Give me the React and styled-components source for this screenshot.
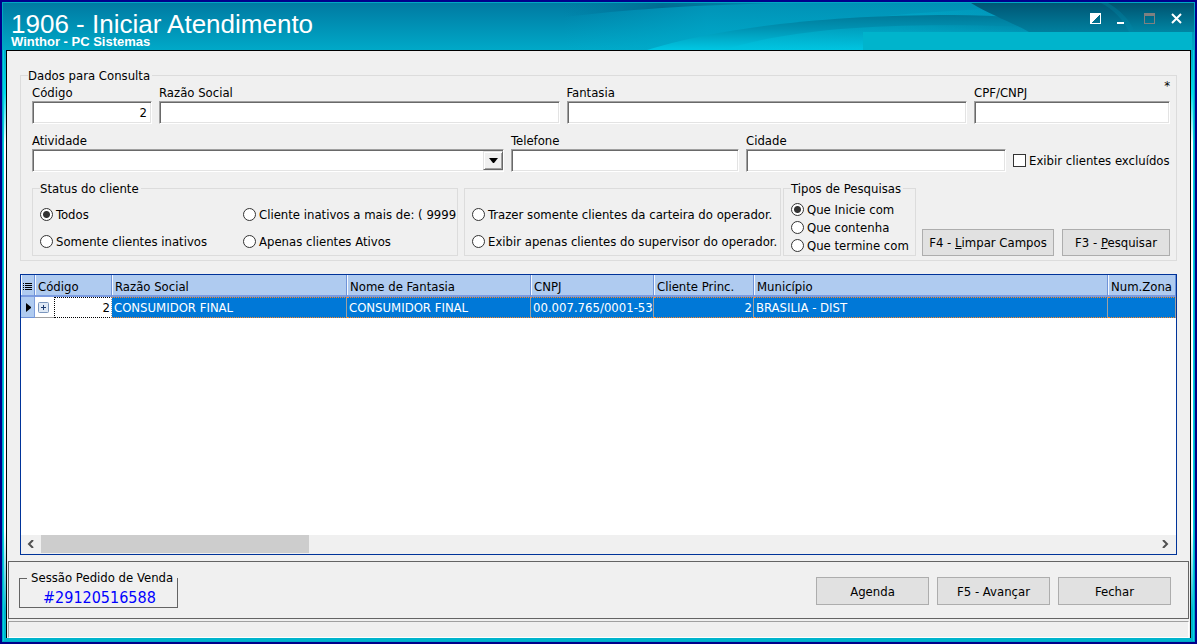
import React, { useState } from 'react';
import styled, { createGlobalStyle, css } from 'styled-components';

const GlobalStyle = createGlobalStyle`
  * {
    box-sizing: border-box;
  }

  body {
    margin: 0;
    font: 13px/15px 'DejaVu Sans Condensed', Tahoma, sans-serif;
    color: #000;
  }

  button, input, select {
    font: inherit;
    color: inherit;
  }
`;

const Frame = styled.div`
  display: flex;
  flex-direction: column;
  min-height: 100vh;
  border: 2px solid #00008b;
  background: #fff;
`;

const Chrome = styled.div`
  flex: 1;
  display: flex;
  flex-direction: column;
  padding: 0 3px 3px;
  border: 1px solid #00a8c4;
  background: linear-gradient(
    #009fbe 40px,
    #00dcec 90px,
    #fff 140px,
    #fff calc(100% - 110px),
    #00b4cc calc(100% - 30px)
  );
  box-shadow: inset 1px 0 #00d0e4, inset -1px 0 #00d0e4;
`;

const TitleBar = styled.header`
  position: relative;
  display: flex;
  justify-content: space-between;
  height: 47px;
  margin: 0 -3px;
  padding: 11px 10px 0 8px;
  color: #fff;
  font-family: 'Liberation Sans', Arial, sans-serif;
  background: linear-gradient(#007aa2, #00a9c8);
`;

const Waves = styled.svg`
  position: absolute;
  top: 0;
  right: 0;
  width: 631px;
  height: 47px;
`;

const Titles = styled.div`
  position: relative;
`;

const Title = styled.h1`
  margin: 0;
  font-size: 26px;
  line-height: 21px;
  font-weight: normal;
`;

const Subtitle = styled.p`
  margin: 0;
  font-size: 13px;
  line-height: 14px;
  font-weight: bold;
`;

const WindowButtons = styled.div`
  position: relative;
  display: flex;
  gap: 14px;
  margin-top: -1px;
`;

const WindowButton = styled.button`
  width: 13px;
  height: 11px;
  padding: 0;
  border: 0;
  background: none;

  svg {
    display: block;
  }
`;

const Body = styled.div`
  flex: 1;
  display: flex;
  flex-direction: column;
  border: 1px solid #000;
  border-bottom: 0;
  background: #f0f0f0;
`;

const Content = styled.main`
  flex: 1;
  display: flex;
  flex-direction: column;
  gap: 13px;
  padding: 17px 13px 6px;
`;

const Group = styled.fieldset`
  min-width: 0;
  margin: 0;
  padding: 0 7px;
  border: 1px solid #dcdcdc;

  legend {
    padding: 0 2px 0 0;
  }
`;

const SearchGroup = styled(Group)`
  position: relative;
  padding: 0 6px 4px 7px;
`;

const Fields = styled.div`
  display: flex;
  flex-direction: column;
  gap: 9px;
  padding: 2px 0 0 4px;
`;

const FieldRow = styled.div`
  display: grid;
  grid-template-columns: ${(p) => p.$columns};
  column-gap: 7px;
`;

const FieldBox = styled.div`
  display: flex;
  flex-direction: column;
  gap: 1px;
  min-width: 0;
`;

const sunken = css`
  width: 100%;
  height: 23px;
  padding: 0 4px;
  border: 1px solid;
  border-color: #a0a0a0 #fff #fff #a0a0a0;
  border-radius: 0;
  outline: none;
  background: #fff;
  box-shadow: inset 1px 1px #696969, inset -1px -1px #e3e3e3;
`;

const TextInput = styled.input`
  ${sunken}
  text-align: ${(p) => p.$align || 'left'};
`;

const SelectBox = styled.div`
  position: relative;
`;

const Select = styled.select`
  ${sunken}
  display: block;
  appearance: none;
`;

const DropArrow = styled.span`
  position: absolute;
  top: 2px;
  right: 1px;
  bottom: 2px;
  display: flex;
  align-items: center;
  justify-content: center;
  width: 20px;
  border: 1px solid;
  border-color: #e3e3e3 #696969 #696969 #e3e3e3;
  background: #f0f0f0;
  box-shadow: inset 1px 1px #fff, inset -1px -1px #a0a0a0;
  pointer-events: none;
`;

const Required = styled.span`
  position: absolute;
  top: -5px;
  right: 6px;
`;

const Option = styled.label`
  display: flex;
  align-items: center;
  gap: 3px;
  white-space: nowrap;
`;

const Radio = styled.input`
  flex: none;
  width: 13px;
  height: 13px;
  margin: 0;
  appearance: none;
  border: 1px solid #333;
  border-radius: 50%;
  background: #fff;

  &:checked {
    background: radial-gradient(circle, #333 3px, #fff 4px);
  }
`;

const Checkbox = styled.input`
  flex: none;
  width: 13px;
  height: 13px;
  margin: 0;
  appearance: none;
  border: 1px solid #333;
  background: #fff;

  &:checked {
    background: #333;
    box-shadow: inset 0 0 0 2px #fff;
  }
`;

const CheckOption = styled(Option)`
  align-self: end;
  height: 23px;
`;

const FilterRow = styled.div`
  display: flex;
  gap: 6px;
`;

const StatusGroup = styled(Group)`
  flex: 1;
`;

const StatusOptions = styled.div`
  display: grid;
  grid-template-columns: 203px 1fr;
  row-gap: 12px;
  padding: 11px 0 6px;
`;

const GroupPair = styled.div`
  display: flex;
  gap: 2px;
`;

const OperatorGroup = styled(Group)`
  width: 317px;
  margin-top: 7px;
`;

const OperatorOptions = styled.div`
  display: grid;
  row-gap: 12px;
  padding: 18px 0 6px;
`;

const MatchGroup = styled(Group)`
  width: 133px;
`;

const MatchOptions = styled.div`
  display: grid;
  row-gap: 3px;
  padding: 6px 0 2px;
`;

const Buttons = styled.div`
  display: flex;
  align-items: flex-end;
  gap: 8px;
`;

const Button = styled.button`
  width: ${(p) => p.$width || 113}px;
  height: ${(p) => p.$height || 27}px;
  padding: 0;
  border: 1px solid #adadad;
  background: #e1e1e1;
  white-space: nowrap;

  &:hover {
    border-color: #0078d7;
    background: #e5f1fb;
  }
`;

const Grid = styled.section`
  flex: 1;
  display: flex;
  flex-direction: column;
  justify-content: space-between;
  min-height: 281px;
  border: 1px solid #003399;
  background: #fff;
`;

const Table = styled.table`
  width: 100%;
  table-layout: fixed;
  border-collapse: separate;
  border-spacing: 0;
`;

const HeadCell = styled.th`
  height: 22px;
  padding: 2px 0 0 3px;
  border-right: 1px solid #6f93d8;
  border-bottom: 2px solid #7b9be0;
  background: #afcbf0;
  box-shadow: inset 1px 0 #f4f8fe;
  font-weight: normal;
  text-align: left;
  white-space: nowrap;
  overflow: hidden;

  svg {
    display: block;
    margin-left: -1px;
  }
`;

const MarkerCell = styled.td`
  height: 21px;
  padding: 0 0 0 5px;
  border-right: 1px solid #7f9fdd;
  border-bottom: 1px solid #6f93d8;
  background: #afcbf0;

  svg {
    display: block;
  }
`;

const ExpandCell = styled.td`
  padding: 0 0 0 3px;
  border-bottom: 1px solid #a0a0a0;
`;

const ExpandButton = styled.button`
  display: block;
  width: 11px;
  height: 11px;
  padding: 0;
  border: 0;
  background: none;

  svg {
    display: block;
  }
`;

const FocusCell = styled.td`
  padding: 0 1px 0 0;
  border: 1px dotted #000;
  border-right-color: #a0a0a0;
  text-align: right;
`;

const Cell = styled.td`
  padding: 0 1px 0 2px;
  border-top: 1px dotted #ff8728;
  border-right: 1px solid #a0a0a0;
  border-bottom: 1px dotted #ff8728;
  background: #0078d7;
  color: #fff;
  text-align: ${(p) => p.$align || 'left'};
  white-space: nowrap;
  overflow: hidden;
`;

const ScrollBar = styled.div`
  display: flex;
  height: 19px;
  background: #f0f0f0;
`;

const ScrollTrack = styled.div`
  flex: 1;
  padding-bottom: 1px;
`;

const ScrollThumb = styled.div`
  width: 24%;
  height: 100%;
  background: #cdcdcd;
`;

const ScrollButton = styled.button`
  display: flex;
  align-items: center;
  justify-content: center;
  width: 20px;
  padding: 0 2px 2px 0;
  border: 0;
  background: none;
`;

const Footer = styled.footer`
  display: flex;
  align-items: flex-start;
  justify-content: space-between;
  margin: 0 1px;
  padding: 9px 17px 10px 10px;
  border: 1px solid #646464;
`;

const FooterButtons = styled(Buttons)`
  padding-top: 6px;
`;

const Session = styled.fieldset`
  width: 159px;
  margin: 0;
  padding: 3px 0 0 7px;
  border: 1px solid #646464;
  white-space: nowrap;

  legend {
    padding: 0 4px;
    line-height: 14px;
  }
`;

const SessionNumber = styled.output`
  display: block;
  padding-left: 16px;
  font-size: 16px;
  line-height: 19px;
  color: #0000ff;
`;

const StatusBar = styled.div`
  height: 17px;
  margin: 2px 1px 0;
  border: 1px solid;
  border-color: #a0a0a0 #fff #fff #a0a0a0;
`;

const statusOptions = [
  'Todos',
  'Cliente inativos a mais de: ( 9999',
  'Somente clientes inativos',
  'Apenas clientes Ativos',
];

const operatorOptions = [
  'Trazer somente clientes da carteira do operador.',
  'Exibir apenas clientes do supervisor do operador.',
];

const matchOptions = ['Que Inicie com', 'Que contenha', 'Que termine com'];

const columns = ['Razão Social', 'Nome de Fantasia', 'CNPJ', 'Cliente Princ.', 'Município', 'Num.Zona'];

function Field({ id, label, ...rest }) {
  return (
    <FieldBox>
      <label htmlFor={id}>{label}</label>
      <TextInput id={id} type="text" {...rest} />
    </FieldBox>
  );
}

function RadioList({ name, options, value, onChange }) {
  return options.map((option) => (
    <Option key={option}>
      <Radio
        type="radio"
        name={name}
        checked={value === option}
        onChange={() => onChange(option)}
      />
      {option}
    </Option>
  ));
}

function TitleWaves() {
  return (
    <Waves viewBox="0 0 631 47" preserveAspectRatio="none" aria-hidden="true">
      <defs>
        <linearGradient id="glow" x1="0" y1="0" x2="1" y2="0">
          <stop offset="0" stopColor="#00b0d0" stopOpacity="0" />
          <stop offset="0.3" stopColor="#00b0d0" stopOpacity="0.45" />
          <stop offset="1" stopColor="#00b0d0" stopOpacity="0.4" />
        </linearGradient>
        <linearGradient id="sliver" x1="0" y1="0" x2="1" y2="0">
          <stop offset="0" stopColor="#006c92" stopOpacity="0" />
          <stop offset="0.45" stopColor="#006c92" />
          <stop offset="1" stopColor="#006c92" stopOpacity="0.2" />
        </linearGradient>
        <linearGradient id="swell" x1="0.4" y1="0" x2="0.3" y2="1">
          <stop offset="0" stopColor="#007a9a" />
          <stop offset="0.4" stopColor="#0093b3" />
          <stop offset="1" stopColor="#00c6e2" />
        </linearGradient>
        <linearGradient id="shine" x1="0" y1="0" x2="1" y2="0">
          <stop offset="0" stopColor="#00c4e0" stopOpacity="0.4" />
          <stop offset="0.6" stopColor="#00c4e0" stopOpacity="0.25" />
          <stop offset="1" stopColor="#00c4e0" stopOpacity="0" />
        </linearGradient>
        <linearGradient id="deep" x1="0" y1="0" x2="0" y2="1">
          <stop offset="0" stopColor="#005674" />
          <stop offset="1" stopColor="#00809f" />
        </linearGradient>
        <linearGradient id="edge" x1="0" y1="0" x2="0" y2="1">
          <stop offset="0" stopColor="#00526f" />
          <stop offset="1" stopColor="#0086a4" />
        </linearGradient>
      </defs>
      <path d="M0 0H480V47H0Z" fill="url(#glow)" />
      <path d="M0 0H220C130 2 70 6 0 14Z" fill="url(#sliver)" />
      <path d="M150 47C200 26 300 10 470 4V47Z" fill="url(#shine)" />
      <path d="M84 47C150 27 250 12 390 12C450 12 500 18 540 28V47Z" fill="url(#swell)" />
      <path d="M160 47C220 28 310 18 470 24V47Z" fill="url(#shine)" />
      <path d="M408 0H631V29H466C450 20 428 12 408 0Z" fill="url(#deep)" />
      <path d="M545 0H631V29H572C566 16 558 8 545 0Z" fill="url(#edge)" />
      <path d="M545 0C558 8 566 16 572 29H566C560 16 550 6 538 0Z" fill="#00a0bc" opacity="0.2" />
      <rect x="300" y="29" width="329" height="18" fill="#00b4cc" />
    </Waves>
  );
}

function App() {
  const [status, setStatus] = useState('Todos');
  const [operator, setOperator] = useState('');
  const [match, setMatch] = useState('Que Inicie com');

  return (
    <Frame>
      <GlobalStyle />
      <Chrome>
        <TitleBar>
          <TitleWaves />
          <Titles>
            <Title>1906 - Iniciar Atendimento</Title>
            <Subtitle>Winthor - PC Sistemas</Subtitle>
          </Titles>
          <WindowButtons>
            <WindowButton type="button" aria-label="Alternar tema">
              <svg width="11" height="11" viewBox="0 0 11 11" shapeRendering="crispEdges">
                <path d="M0 0H11V11H0ZM10 1L1 10H10Z" fill="#fff" fillRule="evenodd" />
              </svg>
            </WindowButton>
            <WindowButton type="button" aria-label="Minimizar">
              <svg width="11" height="11" viewBox="0 0 11 11">
                <path d="M0 9H7V11H0Z" fill="#fff" />
              </svg>
            </WindowButton>
            <WindowButton type="button" aria-label="Maximizar" disabled>
              <svg width="11" height="11" viewBox="0 0 11 11" shapeRendering="crispEdges">
                <path d="M0 0H11V11H0ZM1 3V10H10V3Z" fill="#808080" fillRule="evenodd" />
              </svg>
            </WindowButton>
            <WindowButton type="button" aria-label="Fechar janela">
              <svg width="11" height="11" viewBox="0 0 11 11">
                <path d="M1 1L10 10M10 1L1 10" stroke="#fff" strokeWidth="2" />
              </svg>
            </WindowButton>
          </WindowButtons>
        </TitleBar>

        <Body>
          <Content>
            <SearchGroup>
              <legend>Dados para Consulta</legend>
              <Required>*</Required>
              <Fields>
                <FieldRow $columns="120px 1fr 1fr 196px">
                  <Field id="codigo" label="Código" defaultValue="2" $align="right" />
                  <Field id="razao" label="Razão Social" />
                  <Field id="fantasia" label="Fantasia" />
                  <Field id="cpf" label="CPF/CNPJ" />
                </FieldRow>
                <FieldRow $columns="472fr 228fr 260fr 157px">
                  <FieldBox>
                    <label htmlFor="atividade">Atividade</label>
                    <SelectBox>
                      <Select id="atividade">
                        <option value="" aria-label="Nenhuma" />
                      </Select>
                      <DropArrow>
                        <svg width="9" height="5" viewBox="0 0 9 5">
                          <path d="M0 0H9L5 5H4Z" fill="#000" />
                        </svg>
                      </DropArrow>
                    </SelectBox>
                  </FieldBox>
                  <Field id="telefone" label="Telefone" />
                  <Field id="cidade" label="Cidade" />
                  <CheckOption>
                    <Checkbox type="checkbox" />
                    Exibir clientes excluídos
                  </CheckOption>
                </FieldRow>
                <FilterRow>
                  <StatusGroup>
                    <legend>Status do cliente</legend>
                    <StatusOptions>
                      <RadioList name="status" options={statusOptions} value={status} onChange={setStatus} />
                    </StatusOptions>
                  </StatusGroup>
                  <GroupPair>
                    <OperatorGroup aria-label="Operador">
                      <OperatorOptions>
                        <RadioList
                          name="operator"
                          options={operatorOptions}
                          value={operator}
                          onChange={setOperator}
                        />
                      </OperatorOptions>
                    </OperatorGroup>
                    <MatchGroup>
                      <legend>Tipos de Pesquisas</legend>
                      <MatchOptions>
                        <RadioList name="match" options={matchOptions} value={match} onChange={setMatch} />
                      </MatchOptions>
                    </MatchGroup>
                  </GroupPair>
                  <Buttons>
                    <Button type="button" $width={132}>
                      F4 - <u>L</u>impar Campos
                    </Button>
                    <Button type="button" $width={108}>
                      F3 - <u>P</u>esquisar
                    </Button>
                  </Buttons>
                </FilterRow>
              </Fields>
            </SearchGroup>

            <Grid aria-label="Clientes">
              <Table>
                <colgroup>
                  <col width="14" />
                  <col width="19" />
                  <col width="58" />
                  <col width="235" />
                  <col width="184" />
                  <col width="123" />
                  <col width="100" />
                  <col />
                  <col width="68" />
                </colgroup>
                <thead>
                  <tr>
                    <HeadCell aria-label="Colunas">
                      <svg width="9" height="9" viewBox="0 0 9 9">
                        <path
                          d="M0 1.5H1M2 1.5H9M0 3.5H1M2 3.5H9M0 5.5H1M2 5.5H9M0 7.5H1M2 7.5H9"
                          stroke="#000"
                        />
                      </svg>
                    </HeadCell>
                    <HeadCell colSpan={2}>Código</HeadCell>
                    {columns.map((column) => (
                      <HeadCell key={column}>{column}</HeadCell>
                    ))}
                  </tr>
                </thead>
                <tbody>
                  <tr>
                    <MarkerCell>
                      <svg width="5" height="9" viewBox="0 0 5 9">
                        <path d="M0 0L5 4V5L0 9Z" fill="#000" />
                      </svg>
                    </MarkerCell>
                    <ExpandCell>
                      <ExpandButton type="button" aria-label="Expandir">
                        <svg width="11" height="11" viewBox="0 0 11 11">
                          <rect x="0.5" y="0.5" width="10" height="10" rx="1" fill="#dfe9f5" stroke="#7b96bd" />
                          <path d="M3 5.5H8M5.5 3V8" stroke="#1f3c70" />
                        </svg>
                      </ExpandButton>
                    </ExpandCell>
                    <FocusCell>2</FocusCell>
                    <Cell>CONSUMIDOR FINAL</Cell>
                    <Cell>CONSUMIDOR FINAL</Cell>
                    <Cell $align="right">00.007.765/0001-53</Cell>
                    <Cell $align="right">2</Cell>
                    <Cell>BRASILIA - DIST</Cell>
                    <Cell />
                  </tr>
                </tbody>
              </Table>
              <ScrollBar>
                <ScrollButton type="button" aria-label="Rolar para a esquerda">
                  <svg width="7" height="8" viewBox="0 0 7 8">
                    <path d="M6 0L2 4L6 8" fill="none" stroke="#505050" strokeWidth="2" />
                  </svg>
                </ScrollButton>
                <ScrollTrack>
                  <ScrollThumb />
                </ScrollTrack>
                <ScrollButton type="button" aria-label="Rolar para a direita">
                  <svg width="7" height="8" viewBox="0 0 7 8">
                    <path d="M1 0L5 4L1 8" fill="none" stroke="#505050" strokeWidth="2" />
                  </svg>
                </ScrollButton>
              </ScrollBar>
            </Grid>
          </Content>

          <Footer>
            <Session>
              <legend>Sessão Pedido de Venda</legend>
              <SessionNumber>#29120516588</SessionNumber>
            </Session>
            <FooterButtons>
              <Button type="button" $height={28}>Agenda</Button>
              <Button type="button" $height={28}>F5 - Avançar</Button>
              <Button type="button" $height={28}>Fechar</Button>
            </FooterButtons>
          </Footer>
          <StatusBar />
        </Body>
      </Chrome>
    </Frame>
  );
}

export default App;
